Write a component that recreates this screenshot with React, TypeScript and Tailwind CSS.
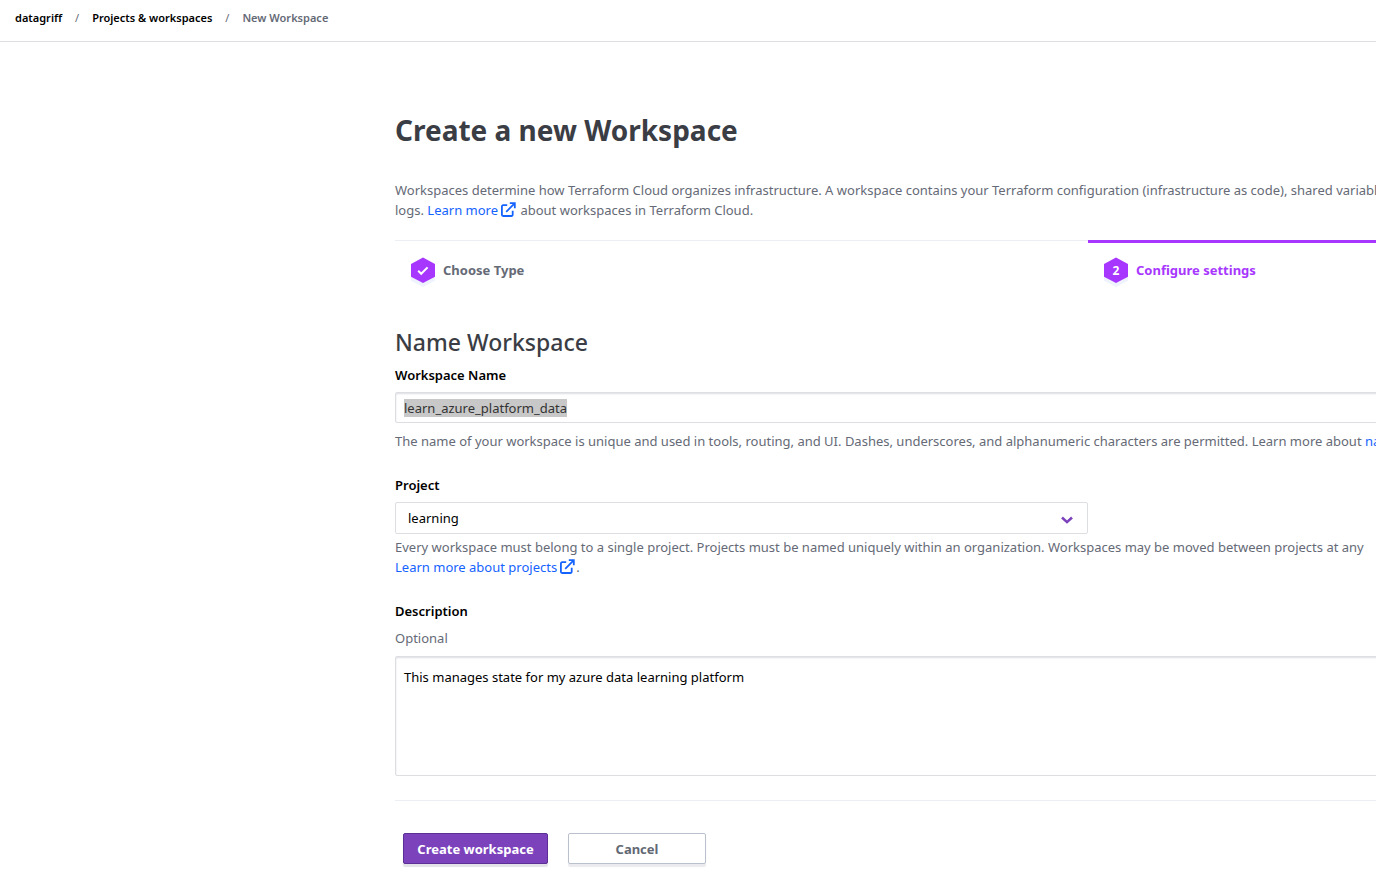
import React, { useEffect, useRef, useState } from "react";

const labelClass = "block text-[13px] leading-5 font-semibold text-black";
const helpClass = "text-[13px] leading-5 text-[#656a76]";
const linkClass = "text-[#1563ff] hover:underline";

function ExternalIcon() {
  return (
    <svg
      className="ml-[3px] inline-block size-4 align-[-3px]"
      viewBox="0 0 16 16"
      fill="none"
      stroke="currentColor"
      strokeWidth="1.8"
    >
      <path d="M6.2 3.2H2.1a1.2 1.2 0 0 0-1.2 1.2v8.4A1.2 1.2 0 0 0 2.1 14h8.4a1.2 1.2 0 0 0 1.2-1.2V8.8" />
      <path d="M8.8 1.2h5v5M13.6 1.4 5.2 9.8" />
    </svg>
  );
}

function Hexagon({ children }: { children: React.ReactNode }) {
  return (
    <svg className="h-8 w-6 overflow-visible" viewBox="0 -2.5 24 32">
      <path d="M12 5l12 6.4v12.8L12 30.6 0 24.2V11.4z" fill="#eef3fd" />
      <path d="M12 1l12 6.4v12.8L12 26.6 0 20.2V7.4z" fill="#a737ff" />
      {children}
    </svg>
  );
}

export default function App() {
  const [name, setName] = useState("learn_azure_platform_data");
  const [description, setDescription] = useState(
    "This manages state for my azure data learning platform"
  );
  const nameRef = useRef<HTMLInputElement>(null);

  useEffect(() => {
    nameRef.current?.focus({ preventScroll: true });
    nameRef.current?.select();
  }, []);

  return (
    <div className="min-h-screen overflow-clip bg-white font-['Noto_Sans',sans-serif]">
      <header className="border-b border-[#dcdee2]">
        <nav className="flex items-center px-[15px] pt-2 pb-[13px] text-[11px] leading-5 font-semibold text-black">
          <a href="#org">datagriff</a>
          <span className="w-[30px] text-center font-normal text-[#656a76]">/</span>
          <a href="#projects">Projects &amp; workspaces</a>
          <span className="w-[30px] text-center font-normal text-[#656a76]">/</span>
          <span className="text-[#656a76]">New Workspace</span>
        </nav>
      </header>

      <main className="pt-[68px] pb-5 pl-[395px]">
        <div className="min-w-[1386px]">
          <h1 className="text-[28px] leading-10 font-bold text-[#3b3d45]">
            Create a new Workspace
          </h1>
          <p className={`mt-[30px] whitespace-nowrap ${helpClass}`}>
            Workspaces determine how Terraform Cloud organizes infrastructure. A
            workspace contains your Terraform configuration (infrastructure as
            code), shared variables,
            <br />
            logs.{" "}
            <a href="#learn" className={linkClass}>
              Learn more
              <ExternalIcon />
            </a>{" "}
            about workspaces in Terraform Cloud.
          </p>

          <ol className="mt-5 grid grid-cols-2 border-t border-[#ebeef2] text-[13px] leading-5 font-bold">
            <li className="flex h-[58px] items-center gap-2 px-4 text-[#656a76]">
              <Hexagon>
                <path
                  d="M7.2 14.3l3 3 6.4-6.4"
                  fill="none"
                  stroke="#fff"
                  strokeWidth="2"
                />
              </Hexagon>
              Choose Type
            </li>
            <li className="relative flex h-[58px] items-center gap-2 px-4 text-[#a737ff] before:absolute before:inset-x-0 before:-top-px before:h-[3px] before:bg-[#a737ff]">
              <Hexagon>
                <text
                  x="12"
                  y="18"
                  textAnchor="middle"
                  fontSize="12"
                  fontWeight="700"
                  fill="#fff"
                >
                  2
                </text>
              </Hexagon>
              Configure settings
            </li>
          </ol>

          <form onSubmit={(e) => e.preventDefault()}>
            <h2 className="mt-[27px] text-[23px] leading-8 font-medium text-[#3b3d45]">
              Name Workspace
            </h2>

            <label htmlFor="name" className={`mt-[7px] ${labelClass}`}>
              Workspace Name
            </label>
            <input
              id="name"
              ref={nameRef}
              value={name}
              onChange={(e) => setName(e.target.value)}
              className="mt-[7px] block h-[31px] w-full rounded-xs border border-[#dcdee2] px-2 text-[13px] text-[#333] shadow-[inset_0_1px_2px_#dcdee2] outline-none selection:bg-[#c8c8c8] selection:text-[#333]"
            />
            <p className={`mt-2 whitespace-nowrap ${helpClass}`}>
              The name of your workspace is unique and used in tools, routing,
              and UI. Dashes, underscores, and alphanumeric characters are
              permitted. Learn more about{" "}
              <a href="#naming" className={linkClass}>
                naming workspaces
              </a>
            </p>

            <label htmlFor="project" className={`mt-6 ${labelClass}`}>
              Project
            </label>
            <div className="relative mt-[7px] w-1/2">
              <select
                id="project"
                className="block h-8 w-full appearance-none rounded-xs border border-[#dcdee2] bg-white px-3 pt-px text-[13px] text-black"
              >
                <option>learning</option>
              </select>
              <svg
                className="pointer-events-none absolute top-3 right-[15px] h-3 w-3"
                viewBox="0 0 12 12"
                fill="none"
                stroke="#7b42bc"
                strokeWidth="2.6"
              >
                <path d="M1 3.5l5 4.6 5-4.6" />
              </svg>
            </div>
            <p className={`mt-[3px] whitespace-nowrap ${helpClass}`}>
              Every workspace must belong to a single project. Projects must be
              named uniquely within an organization. Workspaces may be moved
              between projects at any
              <br />
              <a href="#about-projects" className={linkClass}>
                Learn more about projects
                <ExternalIcon />
              </a>
              .
            </p>

            <label htmlFor="description" className={`mt-6 ${labelClass}`}>
              Description
            </label>
            <p className={`mt-[7px] ${helpClass}`}>Optional</p>
            <textarea
              id="description"
              value={description}
              onChange={(e) => setDescription(e.target.value)}
              className="mt-2 block h-[120px] w-full resize-none rounded-xs border border-[#dcdee2] px-2 py-[10px] text-[13px] leading-5 text-black shadow-[inset_0_1px_2px_#dcdee2] outline-none"
            />

            <div className="mt-6 flex gap-5 border-t border-[#ebeef2] px-2 pt-8 text-[13px] leading-5 font-bold">
              <button
                type="submit"
                className="h-[31px] w-[145px] rounded-xs border border-[#5c2f96] bg-[#7b42bc] text-white shadow-[0_3px_1px_#e3e2e8]"
              >
                Create workspace
              </button>
              <button
                type="button"
                className="h-[31px] w-[138px] rounded-xs border border-[#bac1cc] bg-white text-[#626873] shadow-[0_3px_1px_#ebebef]"
              >
                Cancel
              </button>
            </div>
          </form>
        </div>
      </main>
    </div>
  );
}
